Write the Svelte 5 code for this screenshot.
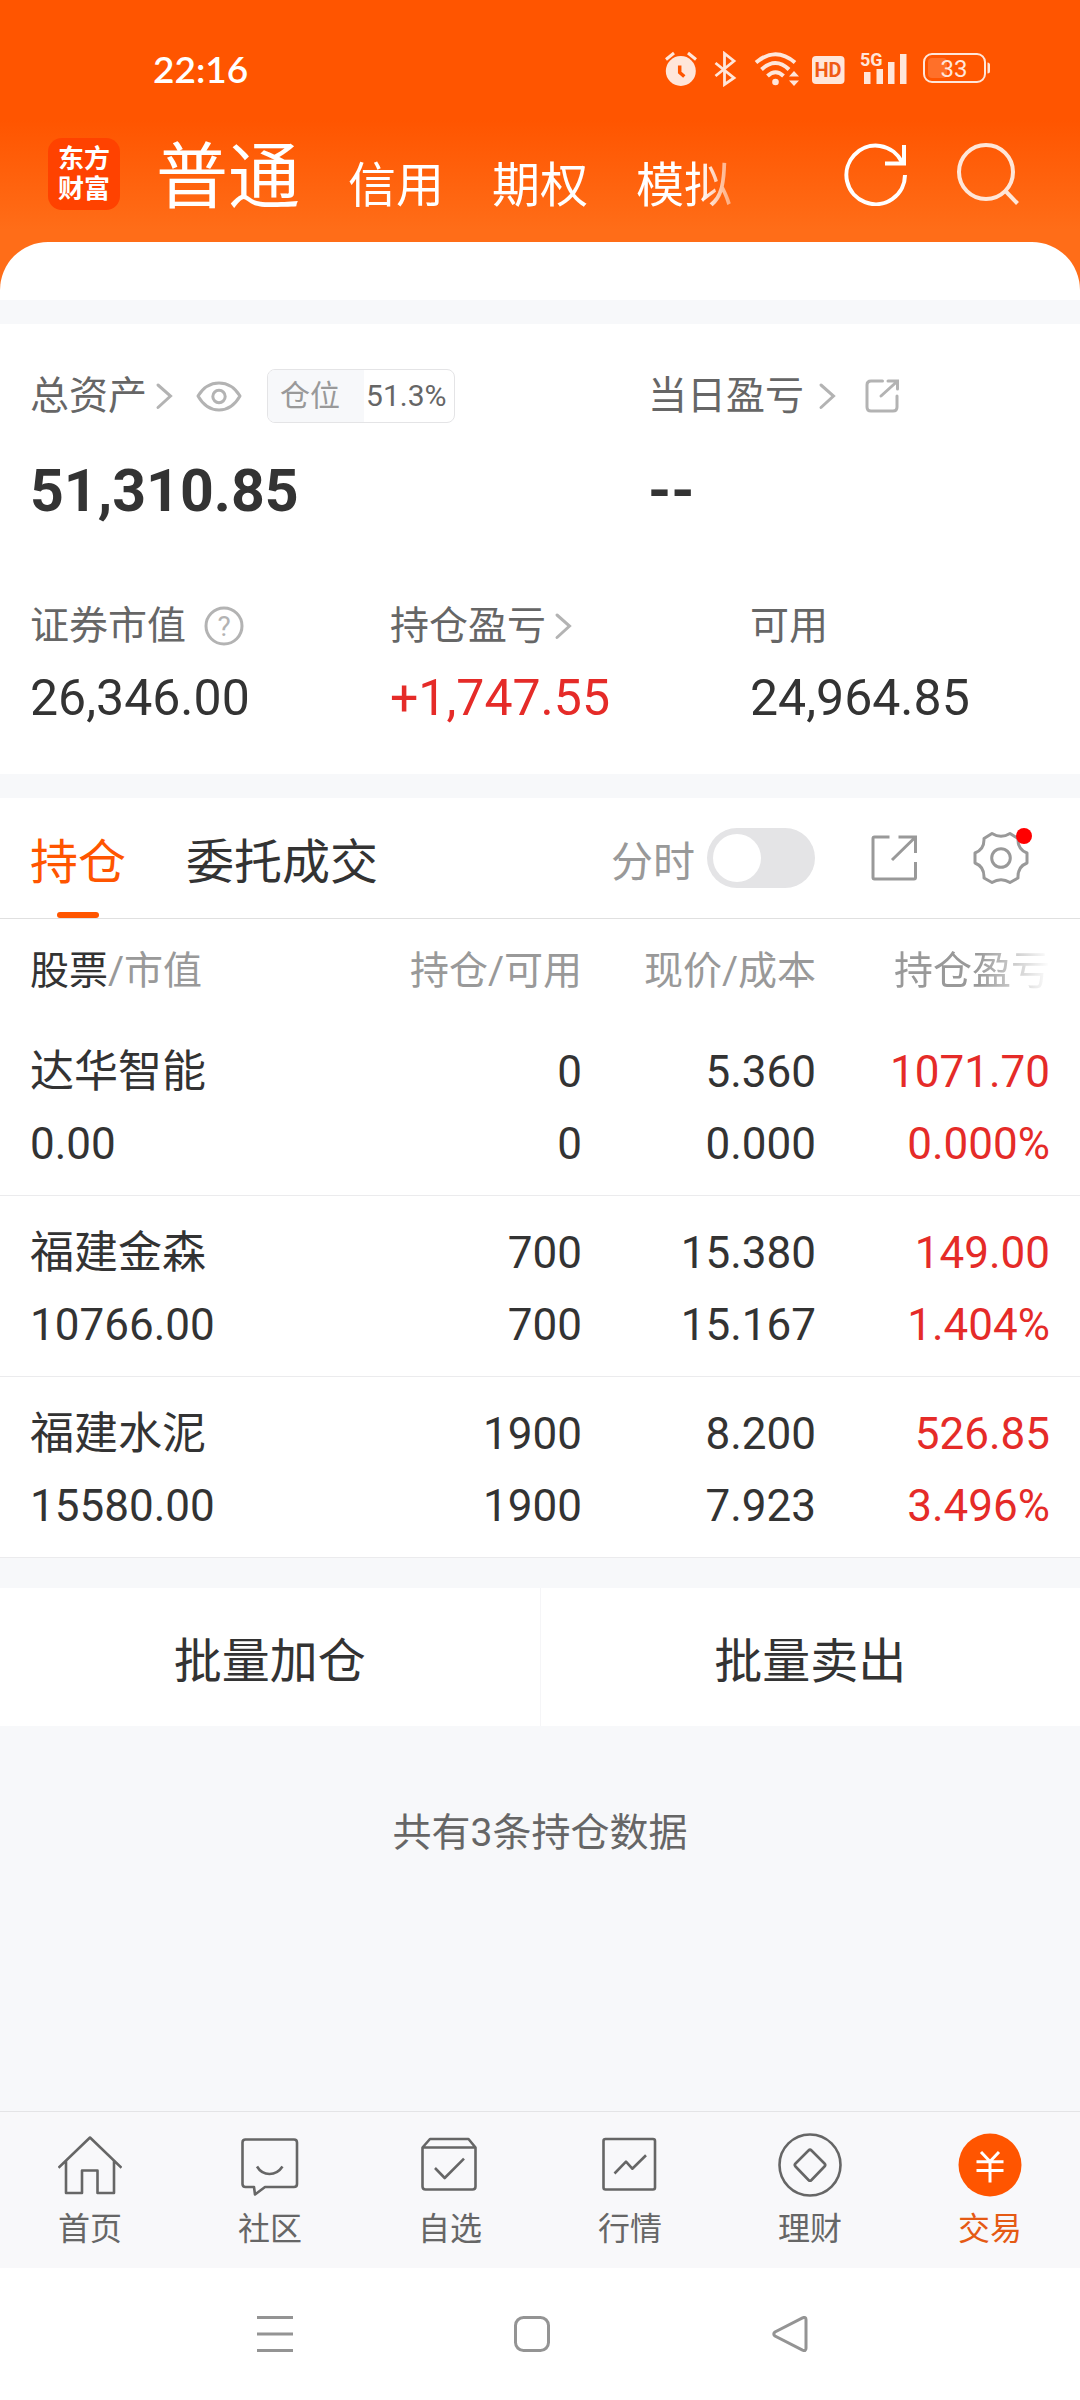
<script lang="ts">
  interface Holding {
    name: string;
    value: string;
    amount: string;
    available: string;
    price: string;
    cost: string;
    profit: string;
    rate: string;
  }

  const accounts = ['普通', '信用', '期权', '模拟'];

  const holdings: Holding[] = [
    { name: '达华智能', value: '0.00', amount: '0', available: '0', price: '5.360', cost: '0.000', profit: '1071.70', rate: '0.000%' },
    { name: '福建金森', value: '10766.00', amount: '700', available: '700', price: '15.380', cost: '15.167', profit: '149.00', rate: '1.404%' },
    { name: '福建水泥', value: '15580.00', amount: '1900', available: '1900', price: '8.200', cost: '7.923', profit: '526.85', rate: '3.496%' },
  ];

  let account = $state('普通');
  let tab = $state('holdings');
  let showTrend = $state(false);
</script>

{#snippet chevron()}
  <svg class="chevron" width="18" height="28" viewBox="0 0 18 28" aria-hidden="true">
    <path d="M3 3 15.500 14 3 25.500" />
  </svg>
{/snippet}

<div class="page">
  <header class="top">
    <div class="status-bar">
      <span class="clock">22:16</span>
      <div class="status-icons">
        <!-- Alarm -->
        <svg width="36" height="36" viewBox="0 0 36 36">
          <circle cx="16.800" cy="20" r="15" fill="#ffe6da" />
          <path d="M2 8.500 10 2M24 2l8 6.500" stroke="#ffe6da" stroke-width="3" />
          <path d="M15.700 14.500v7l4.600 4" stroke="#ff5500" stroke-width="3.500" fill="none" />
        </svg>
        <!-- Bluetooth -->
        <svg width="28" height="36" viewBox="0 0 28 36">
          <path d="M3.500 12 22 27l-9.500 6.500v-31L22 10 3.500 25" fill="none" stroke="#ffe6da" stroke-width="2.800" />
        </svg>
        <!-- Wifi -->
        <svg width="48" height="36" viewBox="0 0 48 36">
          <g fill="none" stroke="#ffe6da" stroke-width="4">
            <path d="M4 11.500Q23.500-5 43 11.500" />
            <path d="M9.500 18.500Q23.500 5.500 37 18.500" />
            <path d="M15.500 25Q23.500 17.500 31.500 25" />
          </g>
          <circle cx="23.500" cy="31" r="3.300" fill="#ffe6da" />
          <path d="M37 25.500 42 20l5 5.500zM37 29.500l5 5.500 5-5.500z" fill="#ffe6da" />
        </svg>
        <!-- HD voice -->
        <svg width="34" height="36" viewBox="0 0 34 36">
          <rect y="5" width="32.500" height="28" rx="4" fill="#ffe6da" />
          <text x="16" y="26" class="hd">HD</text>
        </svg>
        <!-- Signal -->
        <svg class="signal" width="52" height="36" viewBox="0 0 52 36">
          <text x="2" y="15" class="net">5G</text>
          <path d="M6 21h6.500v12H6zM18.500 18H25v15h-6.500zM30 11h6.500v22H30zM42 3h6.500v30H42z" fill="#ffe6da" />
        </svg>
        <!-- Battery -->
        <svg width="68" height="36" viewBox="0 0 68 36">
          <rect x="2" y="3" width="61" height="28" rx="8" fill="none" stroke="#ffe6da" stroke-width="2" />
          <rect x="6" y="7" width="19" height="20" rx="4" fill="#ff7029" />
          <path d="M65.500 11.500q2.500 0 2.500 2.500v6q0 2.500-2.500 2.500z" fill="#ffe6da" />
          <text x="32" y="26" class="level">33</text>
        </svg>
      </div>
    </div>

    <div class="title-bar">
      <div class="logo">东方<br />财富</div>
      <nav class="accounts">
        {#each accounts as item}
          <button class:active={account === item} onclick={() => (account = item)}>{item}</button>
        {/each}
      </nav>
      <div class="actions">
        <button aria-label="刷新">
          <svg width="64" height="64" viewBox="0 0 64 64" fill="none" stroke="#fff" stroke-width="4">
            <path d="M61 33A29.300 29.300 0 1 1 58 20" />
            <path d="M60 3v18.500H41" />
          </svg>
        </button>
        <button aria-label="搜索">
          <svg width="64" height="64" viewBox="0 0 64 64" fill="none" stroke="#ffe6d8" stroke-width="4">
            <circle cx="30" cy="30" r="27" />
            <path d="M49 48.500 61.500 61.500" />
          </svg>
        </button>
      </div>
    </div>
    <div class="sheet"></div>
  </header>

  <section class="card assets">
    <div class="summary">
      <div class="total">
        <div class="label-row">
          <span class="label">总资产</span>
          {@render chevron()}
          <button class="eye" aria-label="隐藏金额">
            <svg width="48" height="34" viewBox="0 0 48 34" fill="none" stroke="#b3b3b3" stroke-width="3">
              <path d="M3 17Q11 4 24 4T45 17Q37 31 24 31T3 17z" stroke-linejoin="round" />
              <circle cx="24" cy="17.500" r="6.200" />
            </svg>
          </button>
          <div class="position">
            <span class="position-label">仓位</span>
            <span class="position-value">51.3%</span>
          </div>
        </div>
        <div class="amount">51,310.85</div>
      </div>
      <div class="today">
        <div class="label-row spread">
          <span class="label">当日盈亏</span>
          {@render chevron()}
          <button class="share" aria-label="分享当日盈亏">
            <svg width="36" height="36" viewBox="0 0 36 36" fill="none" stroke="#b3b3b3" stroke-width="3">
              <path d="M18.500 3H7Q3 3 3 7v22q0 4 4 4h22q4 0 4-4V18" stroke-linecap="round" />
              <path d="M17 18 32.500 4M24 3h9.500v8" stroke-linecap="round" />
            </svg>
          </button>
        </div>
        <div class="amount">--</div>
      </div>
    </div>

    <div class="details">
      <div class="detail">
        <div class="detail-label">
          <span class="label">证券市值</span>
          <svg class="help" width="40" height="40" viewBox="0 0 40 40">
            <circle cx="20" cy="20" r="18" />
            <text x="20" y="30">?</text>
          </svg>
        </div>
        <div class="detail-value">26,346.00</div>
      </div>
      <div class="detail">
        <div class="detail-label">
          <span class="label">持仓盈亏</span>
          {@render chevron()}
        </div>
        <div class="detail-value up">+1,747.55</div>
      </div>
      <div class="detail">
        <div class="detail-label"><span class="label">可用</span></div>
        <div class="detail-value">24,964.85</div>
      </div>
    </div>
  </section>

  <section class="card">
    <div class="tabs">
      <button class="tab" class:active={tab === 'holdings'} onclick={() => (tab = 'holdings')}>持仓</button>
      <button class="tab" class:active={tab === 'orders'} onclick={() => (tab = 'orders')}>委托成交</button>
      <div class="tools">
        <label class="trend">
          分时
          <input type="checkbox" bind:checked={showTrend} />
        </label>
        <button aria-label="分享持仓">
          <svg width="48" height="48" viewBox="0 0 48 48" fill="none" stroke="#999" stroke-width="3">
            <path d="M19.500 3H4.500Q3 3 3 4.500v39Q3 45 4.500 45H44q1.500 0 1.500-1.500V28" />
            <path d="M28.500 3h17v16M45 3.500 22 26" />
          </svg>
        </button>
        <button class="settings" aria-label="设置">
          <svg width="56" height="54" viewBox="0 0 56 54" fill="none" stroke="#999" stroke-width="3">
            <path d="M19 2.500Q28 8 37 2.500L45 7.500Q44.500 18.500 54 22V32Q44.500 35.500 45 47L37 51.500Q28 46 19 51.500L11 47Q11.500 35.500 2 32V22Q11.500 18.500 11 7.500z" stroke-linejoin="round" />
            <circle cx="28" cy="27" r="9.300" />
          </svg>
          <span class="dot"></span>
        </button>
      </div>
    </div>

    <table>
      <thead>
        <tr>
          <th class="stock"><b>股票</b>/市值</th>
          <th>持仓/可用</th>
          <th>现价/成本</th>
          <th class="last"><span class="fade">持仓盈亏</span></th>
        </tr>
      </thead>
      <tbody>
        {#each holdings as item}
          <tr>
            <td class="stock">{item.name}<br />{item.value}</td>
            <td>{item.amount}<br />{item.available}</td>
            <td>{item.price}<br />{item.cost}</td>
            <td class="last up">{item.profit}<br />{item.rate}</td>
          </tr>
        {/each}
      </tbody>
    </table>
  </section>

  <div class="batch">
    <button>批量加仓</button>
    <button>批量卖出</button>
  </div>

  <p class="count">共有{holdings.length}条持仓数据</p>

  <nav class="tab-bar">
    <a href="#home">
      <svg width="64" height="64" viewBox="0 0 64 64">
        <path d="M.500 34.700 32 4.500 63.500 34.700M8 28v32h16V37.500h15.500V60H56V28" />
      </svg>
      首页
    </a>
    <a href="#community">
      <svg width="64" height="64" viewBox="0 0 64 64">
        <path d="M7 6.500H56q3 0 3 3V51q0 3-3 3H27L17 61.500 16 54H7.500q-3 0-3-3V9.500q0-3 3-3z" />
        <path d="M19 33.500q4.500 7.500 12.500 7.500t13-7.500" />
      </svg>
      社区
    </a>
    <a href="#watchlist">
      <svg width="64" height="64" viewBox="0 0 64 64">
        <path d="M4.500 14.500 12 6h38.500l7 8.500V53.500q0 3-3 3h-47q-3 0-3-3zH57.500" />
        <path d="M17 35 26.700 45 46 25.700" />
      </svg>
      自选
    </a>
    <a href="#market">
      <svg width="64" height="64" viewBox="0 0 64 64">
        <rect x="5.500" y="6" width="51.500" height="50.500" rx="2" />
        <path d="M16.500 40.500 28 28.700 34.300 35.700 48 22.300" />
      </svg>
      行情
    </a>
    <a href="#wealth">
      <svg width="64" height="64" viewBox="0 0 64 64">
        <circle cx="32" cy="32" r="30.500" />
        <path d="M30.500 17.500q1.500-1.500 3 0l13 13q1.500 1.500 0 3l-13 13.500q-1.500 1.500-3 0l-13-13.500q-1.500-1.500 0-3z" />
      </svg>
      理财
    </a>
    <a href="#trade" class="current">
      <svg width="64" height="64" viewBox="0 0 64 64">
        <circle cx="32" cy="32" r="31.500" />
        <path d="M23 19 32 28.500 41 19M32 28.500V49.500M18.500 28.700h27M18.500 37.500h27" />
      </svg>
      交易
    </a>
  </nav>

  <div class="system-bar">
    <button aria-label="最近任务">
      <svg width="36" height="36" viewBox="0 0 36 36"><path d="M0 1.500h36M0 18h36M0 34.500h36" /></svg>
    </button>
    <button aria-label="主屏幕">
      <svg width="36" height="36" viewBox="0 0 36 36"><rect x="1.500" y="1.500" width="33" height="33" rx="8" /></svg>
    </button>
    <button aria-label="返回">
      <svg width="36" height="36" viewBox="0 0 36 36">
        <path d="M30.500 1.800q3.500-1.300 3.500 2v28.400q0 3.300-3.500 2L3 20q-2.500-2 0-4z" />
      </svg>
    </button>
  </div>
</div>

<style>
  :global(body) {
    margin: 0;
    background: #f7f8fa;
  }

  .page {
    min-height: 100vh;
    display: flex;
    flex-direction: column;
    font-family: Roboto, "Noto Sans CJK SC", sans-serif;
    color: #333;
  }

  button {
    padding: 0;
    border: none;
    background: none;
    color: inherit;
    font: inherit;
    cursor: pointer;
  }

  svg {
    display: block;
    flex-shrink: 0;
  }

  .top {
    background: linear-gradient(#ff5500 120px, #ff6d18 230px);
  }

  .status-bar {
    display: flex;
    justify-content: space-between;
    align-items: center;
    height: 36px;
    padding: 51px 90px 0 153px;
  }

  .clock {
    font-family: Lato, Roboto, sans-serif;
    font-size: 37px;
    font-weight: 600;
    line-height: 36px;
    color: #fff;
  }

  .status-icons {
    display: flex;
    gap: 12px;
  }

  .status-icons text {
    font-family: Roboto, sans-serif;
    fill: #ffe6da;
  }

  .status-icons .hd {
    font-size: 20px;
    font-weight: 700;
    text-anchor: middle;
    fill: #f05a14;
  }

  .signal {
    overflow: visible;
  }

  .status-icons .net {
    font-size: 18px;
    font-weight: 700;
  }

  .status-icons .level {
    font-size: 24px;
    text-anchor: middle;
  }

  .title-bar {
    display: flex;
    align-items: center;
    height: 108px;
    padding: 33px 60px 14px 48px;
  }

  .logo {
    width: 72px;
    height: 66px;
    padding-top: 6px;
    border-radius: 14px;
    background: #ff4200;
    color: #fff;
    font-size: 26px;
    font-weight: 700;
    line-height: 30px;
    text-align: center;
    flex-shrink: 0;
  }

  .accounts {
    display: flex;
    align-items: baseline;
    gap: 48px;
    flex: 1;
    min-width: 0;
    margin-left: 36px;
    margin-right: 88px;
    padding-top: 16px;
    overflow: hidden;
    white-space: nowrap;
    color: #fff;
    font-size: 48px;
    line-height: 96px;
    -webkit-mask-image: linear-gradient(to left, transparent, #000 56px);
    mask-image: linear-gradient(to left, transparent, #000 56px);
  }

  .accounts .active {
    font-size: 72px;
  }

  .actions {
    display: flex;
    gap: 48px;
  }

  .sheet {
    height: 58px;
    border-radius: 48px 48px 0 0;
    background: #fff;
  }

  .card {
    background: #fff;
  }

  .top,
  .assets {
    margin-bottom: 24px;
  }

  .assets {
    padding: 45px 0 46px;
  }

  .summary {
    display: grid;
    grid-template-columns: 3fr 2fr;
  }

  .total {
    padding-left: 30px;
  }

  .label-row {
    display: flex;
    align-items: center;
    gap: 8px;
    height: 54px;
  }

  .label-row.spread {
    gap: 14px;
  }

  .label {
    color: #666;
    font-size: 39px;
    line-height: 48px;
  }

  .chevron path {
    fill: none;
    stroke: #b3b3b3;
    stroke-width: 3;
    stroke-linecap: round;
  }

  .eye {
    margin: 0 16px 0 14px;
  }

  .share {
    margin-left: 14px;
  }

  .position {
    display: flex;
    border: 1px solid #e4e4e6;
    border-radius: 8px;
    overflow: hidden;
    font-size: 30px;
    line-height: 52px;
  }

  .position-label {
    padding: 0 24px 0 12px;
    background: #f7f8fa;
    color: #999;
  }

  .position-value {
    padding: 0 8px 0 2px;
    color: #666;
  }

  .amount {
    margin-top: 32px;
    font-size: 59px;
    font-weight: 700;
    line-height: 72px;
  }

  .details {
    display: grid;
    grid-template-columns: repeat(3, 1fr);
    margin-top: 75px;
  }

  .detail {
    padding-left: 30px;
  }

  .detail-label {
    display: flex;
    align-items: center;
    gap: 8px;
    height: 48px;
  }

  .help {
    margin-left: 10px;
  }

  .help circle {
    fill: none;
    stroke: #b3b3b3;
    stroke-width: 3;
  }

  .help text {
    fill: #b3b3b3;
    font-size: 28px;
    text-anchor: middle;
  }

  .detail-value {
    margin-top: 18px;
    font-size: 50px;
    line-height: 60px;
  }

  .up {
    color: #e52b28;
  }

  .tabs {
    display: flex;
    gap: 60px;
    height: 120px;
    padding: 0 51px 0 30px;
    border-bottom: 1px solid #e0e0e0;
  }

  .tab {
    position: relative;
    font-size: 48px;
    white-space: nowrap;
  }

  .tab.active {
    color: #ff5500;
  }

  .tab.active::after {
    content: "";
    position: absolute;
    left: 50%;
    bottom: 0;
    width: 42px;
    height: 6px;
    margin-left: -21px;
    border-radius: 3px;
    background: #ff5500;
  }

  .tools {
    display: flex;
    align-items: center;
    gap: 55px;
    margin-left: auto;
  }

  .trend {
    display: flex;
    align-items: center;
    gap: 12px;
    color: #999;
    font-size: 42px;
    white-space: nowrap;
  }

  .trend input {
    appearance: none;
    width: 108px;
    height: 60px;
    margin: 0;
    padding: 6px;
    border-radius: 30px;
    background: #e4e4e6;
    box-sizing: border-box;
  }

  .trend input::before {
    content: "";
    display: block;
    width: 48px;
    height: 48px;
    border-radius: 50%;
    background: #fff;
  }

  .trend input:checked {
    background: #ff5500;
  }

  .trend input:checked::before {
    margin-left: auto;
  }

  .settings {
    position: relative;
  }

  .dot {
    position: absolute;
    top: -3px;
    right: -3px;
    width: 16px;
    height: 16px;
    border-radius: 50%;
    background: #ff0000;
  }

  table {
    width: 100%;
    table-layout: fixed;
    border-collapse: collapse;
  }

  th {
    width: 234px;
    height: 96px;
    padding: 0;
    color: #999;
    font-size: 39px;
    font-weight: 400;
    text-align: right;
  }

  th b {
    color: #333;
    font-weight: 400;
  }

  th.stock {
    width: auto;
  }

  td {
    padding: 21px 0 15px;
    border-bottom: 1px solid #ebebed;
    font-size: 44px;
    line-height: 72px;
    text-align: right;
    white-space: nowrap;
  }

  .stock {
    padding-left: 30px;
    text-align: left;
  }

  .last {
    padding-right: 30px;
  }

  .fade {
    -webkit-mask-image: linear-gradient(to left, transparent, #000 72px);
    mask-image: linear-gradient(to left, transparent, #000 72px);
  }

  .batch {
    display: flex;
    margin-top: 30px;
    background: #fff;
  }

  .batch button {
    flex: 1;
    height: 138px;
    font-size: 48px;
  }

  .batch button + button {
    border-left: 1px solid #f5f5f7;
  }

  .count {
    margin: 81px 0;
    color: #666;
    font-size: 39px;
    line-height: 52px;
    text-align: center;
  }

  .tab-bar {
    display: grid;
    grid-template-columns: repeat(6, 1fr);
    margin-top: auto;
    border-top: 1px solid #e4e4e6;
    background: #f8f8fa;
  }

  .tab-bar a {
    display: flex;
    flex-direction: column;
    align-items: center;
    gap: 12px;
    padding: 21px 0 19px;
    color: #666;
    font-size: 32px;
    line-height: 40px;
    text-decoration: none;
  }

  .tab-bar svg {
    fill: none;
    stroke: #666;
    stroke-width: 2.6;
    stroke-linejoin: round;
  }

  .tab-bar .current {
    color: #e55a14;
  }

  .current circle {
    fill: #ff5500;
    stroke: none;
  }

  .current path {
    stroke: #fff;
    stroke-width: 3;
  }

  .system-bar {
    display: flex;
    justify-content: space-between;
    align-items: center;
    height: 132px;
    padding: 0 25.2% 0 23.8%;
    background: #fff;
  }

  .system-bar svg {
    fill: none;
    stroke: #949494;
    stroke-width: 3;
  }
</style>
